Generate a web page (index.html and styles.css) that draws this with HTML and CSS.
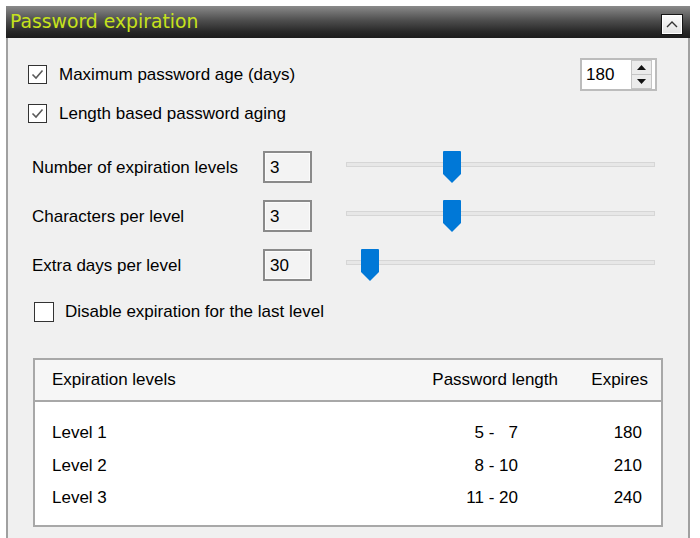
FILE: index.html
```html
<!DOCTYPE html>
<html>
<head>
<meta charset="utf-8">
<link rel="stylesheet" href="styles.css">
</head>
<body>
<div class="panel">
  <div class="hdr">
    <span class="title">Password expiration</span>
    <span class="collapse"><svg width="20" height="19" viewBox="0 0 20 19"><path d="M5 12 L10 7 L15 12" fill="none" stroke="#333" stroke-width="1.4"/></svg></span>
  </div>
  <div class="body">
    <div class="row r1">
      <label class="chk"><span class="box"><svg width="17" height="17" viewBox="0 0 17 17"><path d="M3.5 8.5 L7 12 L13.5 4.5" fill="none" stroke="#5a5a5a" stroke-width="1.6"/></svg></span>Maximum password age (days)</label>
      <div class="spin">
        <span class="spin-val">180</span>
        <span class="spin-btns">
          <span class="sb"><svg width="9" height="5" viewBox="0 0 9 5"><path d="M0 5 L4.5 0 L9 5 Z" fill="#111"/></svg></span>
          <span class="sb"><svg width="9" height="5" viewBox="0 0 9 5"><path d="M0 0 L9 0 L4.5 5 Z" fill="#111"/></svg></span>
        </span>
      </div>
    </div>
    <div class="row r2">
      <label class="chk"><span class="box"><svg width="17" height="17" viewBox="0 0 17 17"><path d="M3.5 8.5 L7 12 L13.5 4.5" fill="none" stroke="#5a5a5a" stroke-width="1.6"/></svg></span>Length based password aging</label>
    </div>

    <div class="srow">
      <span class="lbl">Number of expiration levels</span>
      <span class="num">3</span>
      <div class="slider"><div class="track"></div><svg class="thumb" style="left:97px" width="18" height="32" viewBox="0 0 18 32"><path d="M1 0 H17 Q18 0 18 1 V23 L9 32 L0 23 V1 Q0 0 1 0 Z" fill="#0078d7"/></svg></div>
    </div>
    <div class="srow">
      <span class="lbl">Characters per level</span>
      <span class="num">3</span>
      <div class="slider"><div class="track"></div><svg class="thumb" style="left:97px" width="18" height="32" viewBox="0 0 18 32"><path d="M1 0 H17 Q18 0 18 1 V23 L9 32 L0 23 V1 Q0 0 1 0 Z" fill="#0078d7"/></svg></div>
    </div>
    <div class="srow">
      <span class="lbl">Extra days per level</span>
      <span class="num">30</span>
      <div class="slider"><div class="track"></div><svg class="thumb" style="left:15px" width="18" height="32" viewBox="0 0 18 32"><path d="M1 0 H17 Q18 0 18 1 V23 L9 32 L0 23 V1 Q0 0 1 0 Z" fill="#0078d7"/></svg></div>
    </div>

    <div class="row r3">
      <label class="chk"><span class="box empty"></span>Disable expiration for the last level</label>
    </div>

    <div class="list">
      <div class="lhead">
        <span class="c1">Expiration levels</span>
        <span class="c2">Password length</span>
        <span class="c3">Expires</span>
      </div>
      <div class="lbody">
        <div class="lrow"><span class="c1">Level 1</span><span class="c2">5 -   7</span><span class="c3">180</span></div>
        <div class="lrow"><span class="c1">Level 2</span><span class="c2">8 - 10</span><span class="c3">210</span></div>
        <div class="lrow"><span class="c1">Level 3</span><span class="c2">11 - 20</span><span class="c3">240</span></div>
      </div>
    </div>
  </div>
</div>
</body>
</html>
```
FILE: styles.css
```css
html, body {
  margin: 0;
  padding: 0;
  background: #ffffff;
}
body {
  font-family: "Liberation Sans", Arial, sans-serif;
  font-size: 17px;
  color: #000;
  overflow: hidden;
}
.panel {
  margin: 6px 0 0 6px;
  width: 684px;
}
.hdr {
  height: 32px;
  box-sizing: border-box;
  display: flex;
  align-items: center;
  justify-content: space-between;
  padding: 0 7px 0 4px;
  background: linear-gradient(#8a8a8a 0%, #4e4e4e 45%, #282828 80%, #1c1c1c 100%);
}
.title {
  font-family: "DejaVu Sans", Verdana, sans-serif;
  font-size: 18.8px;
  color: #c6e21c;
  margin-top: -1px;
}
.collapse {
  width: 22px;
  height: 21px;
  box-sizing: border-box;
  border: 1px solid #151515;
  background: linear-gradient(#fbfbfb, #e2e2e2);
  box-shadow: inset 0 0 0 1px #ffffff;
  display: flex;
  align-items: center;
  justify-content: center;
  margin-top: 4px;
}
.body {
  background: #f0f0f0;
  border-left: 2px solid #a0a0a0;
  border-right: 2px solid #a0a0a0;
  height: 520px;
  padding-top: 20px;
  box-sizing: border-box;
}
.row {
  display: flex;
  align-items: center;
}
.r1 {
  height: 33px;
  padding-left: 20px;
  padding-right: 31px;
  justify-content: space-between;
}
.r2 {
  height: 19px;
  margin-top: 13px;
  padding-left: 20px;
}
.r3 {
  height: 20px;
  margin-top: 21px;
  padding-left: 26px;
}
.chk {
  display: flex;
  align-items: center;
  gap: 12px;
}
.box {
  width: 19px;
  height: 19px;
  box-sizing: border-box;
  border: 1px solid #333333;
  background: #ffffff;
  display: flex;
  align-items: center;
  justify-content: center;
}
.r3 .chk { gap: 11px; }
.box.empty {
  width: 20px;
  height: 20px;
}
.spin {
  width: 77px;
  height: 33px;
  box-sizing: border-box;
  border: 2px solid #bcbcbc;
  background: #ffffff;
  display: flex;
  align-items: center;
  justify-content: space-between;
  padding: 0 3px 0 4px;
}
.spin-btns {
  display: flex;
  flex-direction: column;
  width: 21px;
  height: 29px;
}
.sb {
  flex: 1;
  display: flex;
  align-items: center;
  justify-content: center;
  background: #ebebeb;
  border: 1px solid #c4c4c4;
}
.sb + .sb {
  border-top: none;
}
.srow {
  display: flex;
  align-items: center;
  height: 32px;
  padding-left: 24px;
  margin-top: 17px;
}
.r2 + .srow {
  margin-top: 28px;
}
.lbl {
  width: 231px;
  padding-top: 2px;
}
.num {
  width: 49px;
  height: 32px;
  box-sizing: border-box;
  border: 2px solid #8a8a8a;
  box-shadow: inset 0 0 0 1px #fbfbfb;
  background: #f3f3f3;
  padding-left: 5px;
  line-height: 29px;
}
.slider {
  position: relative;
  width: 309px;
  height: 32px;
  margin-left: 34px;
}
.track {
  margin-top: 11px;
  height: 5px;
  box-sizing: border-box;
  background: #e7e7e7;
  border: 1px solid #d6d6d6;
}
.thumb {
  position: absolute;
  top: 0;
}
.list {
  margin: 36px 0 0 25px;
  width: 630px;
  height: 169px;
  box-sizing: border-box;
  border: 2px solid #a8a8a8;
  background: #ffffff;
}
.lhead, .lrow {
  display: grid;
  grid-template-columns: 1fr 150px 90px;
  align-items: center;
}
.lhead {
  height: 42px;
  background: #f6f6f6;
  border-bottom: 2px solid #a8a8a8;
  box-sizing: border-box;
}
.lbody {
  padding-top: 15px;
}
.lrow {
  height: 32.5px;
}
.c1 {
  padding-left: 17px;
}
.c2 {
  text-align: right;
  white-space: pre;
}
.c3 {
  text-align: right;
}
.lhead .c2 { padding-right: 13px; }
.lhead .c3 { padding-right: 13px; }
.lrow .c2 { padding-right: 53px; }
.lrow .c3 { padding-right: 19px; }
```
